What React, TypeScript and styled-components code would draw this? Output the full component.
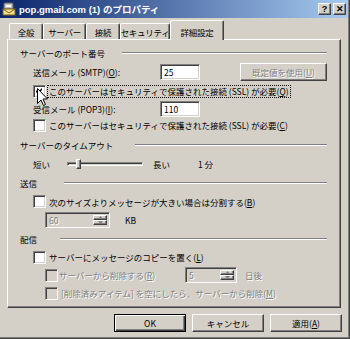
import React from "react";
import styled, { createGlobalStyle, css } from "styled-components";

const GlobalStyle = createGlobalStyle`
  html, body { margin: 0; padding: 0; background: #d4d0c8; }
  body {
    font-family: "Noto Sans CJK JP", "Noto Sans", sans-serif;
    font-size: 8.5px;
    color: #000;
  }
  * { box-sizing: border-box; }
`;

const FACE = "#d4d0c8";
const SHADOW = "#808080";
const DARK = "#404040";

const raised = css`
  border: 1px solid;
  border-color: #fff ${DARK} ${DARK} #fff;
  box-shadow: inset -1px -1px ${SHADOW};
`;

const sunken = css`
  border: 1px solid;
  border-color: ${SHADOW} #fff #fff ${SHADOW};
  box-shadow: inset 1px 1px ${DARK}, inset -1px -1px ${FACE};
`;

const Window = styled.div`
  position: relative;
  width: 350px;
  height: 339px;
  background: ${FACE};
  display: flex;
  flex-direction: column;
  box-shadow: inset -1px -1px ${DARK}, inset -2px -2px ${SHADOW};
  overflow: hidden;
`;

const TitleBar = styled.div`
  width: 348px;
  height: 18px;
  display: flex;
  align-items: center;
  padding: 0 2px 0 2px;
  background: linear-gradient(to right, #0a246a, #a6caf0);
  color: #fff;
`;

const TitleText = styled.span`
  margin-left: 2px;
  font-family: "Liberation Sans", "Noto Sans CJK JP", sans-serif;
  font-weight: bold;
  font-size: 9.5px;
  white-space: nowrap;
  flex: 1;
`;

const TitleButton = styled.div`
  width: 13px;
  height: 12px;
  margin-left: 2px;
  background: ${FACE};
  ${raised};
  display: flex;
  align-items: center;
  justify-content: center;
  color: #000;
  font-family: "Liberation Sans", sans-serif;
  font-weight: bold;
  font-size: 9px;
  line-height: 1;
`;

const Body = styled.div`
  padding: 2px 0 0 7px;
  display: flex;
  flex-direction: column;
`;

const TabStrip = styled.div`
  height: 19px;
  display: flex;
  align-items: flex-end;
  padding-left: 2px;
  position: relative;
  z-index: 1;
`;

const Tab = styled.div<{ $w: number; $active?: boolean }>`
  width: ${(p) => p.$w}px;
  height: ${(p) => (p.$active ? 20 : 16)}px;
  margin-bottom: ${(p) => (p.$active ? -1 : 0)}px;
  padding-top: ${(p) => (p.$active ? 2 : 0)}px;
  background: ${FACE};
  border-left: 1px solid #fff;
  border-top: 1px solid #fff;
  border-right: 1px solid ${DARK};
  box-shadow: inset -1px 0 ${SHADOW};
  border-radius: 2px 2px 0 0;
  display: flex;
  align-items: center;
  justify-content: center;
  white-space: nowrap;
  letter-spacing: -0.3px;
`;

const Panel = styled.div`
  width: 334px;
  height: 269px;
  border-left: 1px solid #fff;
  border-top: 1px solid #fff;
  border-right: 1px solid ${DARK};
  border-bottom: 1px solid ${DARK};
  box-shadow: inset -1px -1px ${SHADOW};
  padding: 4px 13px 0 12px;
  display: flex;
  flex-direction: column;
`;

const Row = styled.div<{ $h: number; $indent?: number }>`
  height: ${(p) => p.$h}px;
  padding-left: ${(p) => p.$indent ?? 0}px;
  display: flex;
  align-items: center;
  white-space: nowrap;
`;

const Etched = styled.div<{ $gap: number }>`
  flex: 1;
  margin-left: ${(p) => p.$gap}px;
  height: 2px;
  border-top: 1px solid ${SHADOW};
  border-bottom: 1px solid #fff;
`;

const Text = styled.span<{ $w?: number; $ml?: number; $disabled?: boolean }>`
  display: inline-block;
  ${(p) => (p.$w ? `width: ${p.$w}px;` : "")}
  margin-left: ${(p) => p.$ml ?? 0}px;
  ${(p) =>
    p.$disabled
      ? css`
          color: ${SHADOW};
          text-shadow: 1px 1px #fff;
        `
      : ""}
`;

const FocusText = styled.span`
  margin-left: 1px;
  padding: 0 1px;
  border: 1px dotted #000;
  line-height: 11px;
`;

const TextBox = styled.div<{ $w: number }>`
  width: ${(p) => p.$w}px;
  height: 16px;
  background: #fff;
  ${sunken};
  padding: 0 3px;
  display: flex;
  align-items: center;
`;

const Box = styled.div<{ $disabled?: boolean }>`
  width: 13px;
  height: 13px;
  flex: none;
  background: ${(p) => (p.$disabled ? FACE : "#fff")};
  ${sunken};
  display: flex;
  align-items: center;
  justify-content: center;
`;

const PushButton = styled.div<{ $w: number; $h: number; $default?: boolean; $disabled?: boolean }>`
  width: ${(p) => p.$w}px;
  height: ${(p) => p.$h}px;
  background: ${FACE};
  display: flex;
  align-items: center;
  justify-content: center;
  white-space: nowrap;
  ${(p) =>
    p.$default
      ? css`
          border: 1px solid #000;
          box-shadow: inset 1px 1px #fff, inset -1px -1px ${DARK}, inset -2px -2px ${SHADOW};
        `
      : raised}
  ${(p) =>
    p.$disabled
      ? css`
          color: ${SHADOW};
          text-shadow: 1px 1px #fff;
        `
      : ""}
`;

const RightButton = styled(PushButton)`
  margin-left: auto;
`;

const Spinner = styled.div<{ $w: number; $ml?: number }>`
  width: ${(p) => p.$w}px;
  height: 16px;
  margin-left: ${(p) => p.$ml ?? 0}px;
  background: ${FACE};
  ${sunken};
  padding: 2px;
  display: flex;
  align-items: stretch;
`;

const SpinValue = styled.div`
  flex: 1;
  padding-left: 1px;
  display: flex;
  align-items: center;
  color: ${SHADOW};
  text-shadow: 1px 1px #fff;
`;

const SpinButtons = styled.div`
  width: 14px;
  display: flex;
  flex-direction: column;
`;

const SpinHalf = styled.div`
  flex: 1;
  background: ${FACE};
  ${raised};
  display: flex;
  align-items: center;
  justify-content: center;
`;

const Slider = styled.div<{ $w: number }>`
  position: relative;
  width: ${(p) => p.$w}px;
  height: 16px;
  display: flex;
  align-items: center;
`;

const SliderTrack = styled.div`
  width: 100%;
  height: 4px;
  ${sunken};
`;

const SliderThumb = styled.div<{ $left: number }>`
  position: absolute;
  left: ${(p) => p.$left}px;
  top: 3px;
  width: 5px;
  height: 10px;
  background: ${FACE};
  ${raised};
`;

const ButtonRow = styled.div`
  width: 335px;
  margin-top: 6px;
  display: flex;
  justify-content: flex-end;
  gap: 6px;
`;

const Cursor = styled.svg`
  position: absolute;
  left: 37px;
  top: 88px;
  pointer-events: none;
`;

const Check = () => (
  <svg width="7" height="7" viewBox="0 0 7 7">
    <path d="M0 2 L2 4 L6 0 L6 2 L2 6 L0 4 Z" fill="#000" />
  </svg>
);

const Arrow = ({ up }: { up?: boolean }) => (
  <svg width="5" height="3" viewBox="0 0 5 3">
    <path d={up ? "M2.5 0 L5 3 L0 3 Z" : "M0 0 L5 0 L2.5 3 Z"} fill={SHADOW} />
  </svg>
);

const MailIcon = () => (
  <svg width="15" height="14" viewBox="0 0 15 14">
    <rect x="2" y="1" width="9" height="6" rx="1" fill="#c0c0c0" stroke="#606060" strokeWidth="1" />
    <rect x="4" y="3" width="5" height="2" fill="#ffffff" />
    <rect x="1" y="7" width="12" height="6" fill="#f4e08a" stroke="#806020" strokeWidth="1" />
    <path d="M1 7 L7 11 L13 7" fill="none" stroke="#806020" strokeWidth="1" />
  </svg>
);

const Spin = ({ value, w, ml }: { value: string; w: number; ml?: number }) => (
  <Spinner $w={w} $ml={ml}>
    <SpinValue>{value}</SpinValue>
    <SpinButtons>
      <SpinHalf>
        <Arrow up />
      </SpinHalf>
      <SpinHalf>
        <Arrow />
      </SpinHalf>
    </SpinButtons>
  </Spinner>
);

const GroupHeader = ({ label, h, gap }: { label: string; h: number; gap: number }) => (
  <Row $h={h}>
    <Text>{label}</Text>
    <Etched $gap={gap} />
  </Row>
);

export default function App() {
  return (
    <>
      <GlobalStyle />
      <Window>
        <TitleBar>
          <MailIcon />
          <TitleText>pop.gmail.com (1) のプロパティ</TitleText>
          <TitleButton>?</TitleButton>
          <TitleButton>✕</TitleButton>
        </TitleBar>
        <Body>
          <TabStrip>
            <Tab $w={34}>全般</Tab>
            <Tab $w={43}>サーバー</Tab>
            <Tab $w={34}>接続</Tab>
            <Tab $w={50}>セキュリティ</Tab>
            <Tab $w={54} $active>
              詳細設定
            </Tab>
          </TabStrip>
          <Panel>
            <GroupHeader label="サーバーのポート番号" h={18} gap={17} />
            <Row $h={20} $indent={13}>
              <Text $w={127}>
                送信メール (SMTP)(<u>O</u>):
              </Text>
              <TextBox $w={40}>25</TextBox>
              <RightButton $w={87} $h={18} $disabled>
                既定値を使用(<u>U</u>)
              </RightButton>
            </Row>
            <Row $h={19} $indent={13}>
              <Box>
                <Check />
              </Box>
              <FocusText>
                このサーバーはセキュリティで保護された接続 (SSL) が必要(<u>Q</u>)
              </FocusText>
            </Row>
            <Row $h={15} $indent={13}>
              <Text $w={127}>
                受信メール (POP3)(<u>I</u>):
              </Text>
              <TextBox $w={40}>110</TextBox>
            </Row>
            <Row $h={18} $indent={13}>
              <Box />
              <Text $ml={3}>
                このサーバーはセキュリティで保護された接続 (SSL) が必要(<u>C</u>)
              </Text>
            </Row>
            <GroupHeader label="サーバーのタイムアウト" h={21} gap={22} />
            <Row $h={17} $indent={13}>
              <Text $w={34}>短い</Text>
              <Slider $w={76}>
                <SliderTrack />
                <SliderThumb $left={9} />
              </Slider>
              <Text $w={45} $ml={10}>
                長い
              </Text>
              <Text>1 分</Text>
            </Row>
            <GroupHeader label="送信" h={21} gap={27} />
            <Row $h={17} $indent={13}>
              <Box />
              <Text $ml={3}>
                次のサイズよりメッセージが大きい場合は分割する(<u>B</u>)
              </Text>
            </Row>
            <Row $h={19} $indent={25}>
              <Spin value="60" w={65} />
              <Text $ml={15}>KB</Text>
            </Row>
            <GroupHeader label="配信" h={19} gap={23} />
            <Row $h={18} $indent={13}>
              <Box />
              <Text $ml={3}>
                サーバーにメッセージのコピーを置く(<u>L</u>)
              </Text>
            </Row>
            <Row $h={18} $indent={25}>
              <Box $disabled />
              <Text $ml={1} $w={126} $disabled>
                サーバーから削除する(<u>R</u>)
              </Text>
              <Spin value="5" w={52} />
              <Text $ml={8} $disabled>
                日後
              </Text>
            </Row>
            <Row $h={18} $indent={25}>
              <Box $disabled />
              <Text $ml={3} $disabled>
                [削除済みアイテム] を空にしたら、サーバーから削除(<u>M</u>)
              </Text>
            </Row>
          </Panel>
          <ButtonRow>
            <PushButton $w={72} $h={18} $default>
              OK
            </PushButton>
            <PushButton $w={72} $h={18}>
              キャンセル
            </PushButton>
            <PushButton $w={72} $h={18}>
              適用(<u>A</u>)
            </PushButton>
          </ButtonRow>
        </Body>
        <Cursor width="12" height="19" viewBox="0 0 12 19">
          <path
            d="M0.5 0.5 L0.5 15.5 L4 12 L6.5 17.5 L8.5 16.5 L6 11 L10.5 11 Z"
            fill="#fff"
            stroke="#000"
            strokeWidth="1"
          />
        </Cursor>
      </Window>
    </>
  );
}
